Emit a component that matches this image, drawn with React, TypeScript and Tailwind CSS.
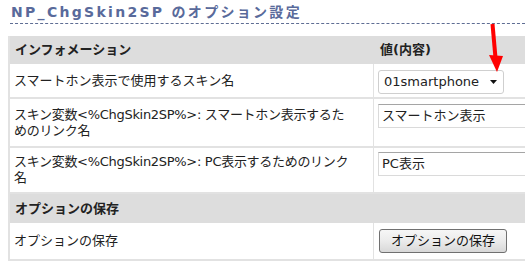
import React from "react";

const font = {
  fontFamily: '"DejaVu Sans", "Noto Sans CJK JP", sans-serif',
};

function RedArrow() {
  return (
    <svg
      className="absolute left-0 top-0 pointer-events-none"
      width="525"
      height="80"
      viewBox="0 0 525 80"
    >
      <line x1="492.5" y1="24" x2="495.5" y2="58" stroke="#ff0000" strokeWidth="4" />
      <polygon points="489,55 503,56 497,72" fill="#ff0000" />
    </svg>
  );
}

export default function App() {
  return (
    <div className="relative w-[525px] h-[271px] overflow-hidden bg-white text-[13px] text-[#222]" style={font}>
      {/* Heading */}
      <h2 className="ml-[10px] pt-[2px] pb-[1px] leading-[20px] text-[14px] font-bold tracking-[2.3px] text-[#596a9b] border-b border-dashed border-[#5f6d94] whitespace-nowrap">
        <span className="pl-[1px]">NP_ChgSkin2SP のオプション設定</span>
      </h2>

      {/* Options table */}
      <div className="ml-[8px] mt-[12px] w-[600px] border-l-2 border-[#e2e2e2] leading-[16px]">
        <div className="flex h-[28px] items-center bg-[#dddddd] font-bold">
          <div className="w-[363px] shrink-0 pl-[5px]">インフォメーション</div>
          <div className="pl-[7px]">値(内容)</div>
        </div>

        <div className="flex h-[35px] border-b-2 border-[#e2e2e2]">
          <div className="w-[363px] shrink-0 pl-[4px] flex items-center">スマートホン表示で使用するスキン名</div>
          <div className="flex-1 border-l border-[#e2e2e2] pl-[4px] pt-[6px]">
            <div className="flex h-[24px] w-[126px] items-center justify-between rounded-[3px] border border-[#cfcfcf] bg-white pl-[5px] pr-[6px]">
              <span>01smartphone</span>
              <svg width="7" height="4" viewBox="0 0 7 4">
                <polygon points="0,0 7,0 3.5,4" fill="#111" />
              </svg>
            </div>
          </div>
        </div>

        <div className="flex h-[49px] border-b-2 border-[#e2e2e2]">
          <div className="w-[363px] shrink-0 pl-[4px] flex items-center whitespace-nowrap tracking-[-0.3px]">
            <span>
              スキン変数&lt;%ChgSkin2SP%&gt;: スマートホン表示するた
              <br />
              めのリンク名
            </span>
          </div>
          <div className="flex-1 border-l border-[#e2e2e2] pl-[4px] pt-[5px]">
            <div className="flex h-[24px] w-[250px] items-center border border-[#dadada] border-t-[#a5a5a5] bg-white pl-[3px]">
              スマートホン表示
            </div>
          </div>
        </div>

        <div className="flex h-[46px] border-b-2 border-[#e2e2e2]">
          <div className="w-[363px] shrink-0 pl-[4px] flex items-center whitespace-nowrap tracking-[-0.3px]">
            <span>
              スキン変数&lt;%ChgSkin2SP%&gt;: PC表示するためのリンク
              <br />名
            </span>
          </div>
          <div className="flex-1 border-l border-[#e2e2e2] pl-[4px] pt-[4px]">
            <div className="flex h-[24px] w-[250px] items-center border border-[#dadada] border-t-[#a5a5a5] bg-white pl-[3px]">
              PC表示
            </div>
          </div>
        </div>

        <div className="flex h-[29px] items-center bg-[#dddddd] font-bold">
          <div className="w-[363px] shrink-0 pl-[5px]">オプションの保存</div>
        </div>

        <div className="flex h-[38px] border-b-2 border-[#e2e2e2]">
          <div className="w-[363px] shrink-0 pl-[4px] flex items-center">オプションの保存</div>
          <div className="flex-1 border-l border-[#e2e2e2] pl-[5px] flex items-center">
            <button className="h-[24px] w-[128px] rounded-[3px] border border-[#707070] bg-gradient-to-b from-[#f6f6f6] via-[#ebebeb] to-[#d8d8d8] text-[13px] text-[#111]">
              オプションの保存
            </button>
          </div>
        </div>
      </div>

      <RedArrow />
    </div>
  );
}
